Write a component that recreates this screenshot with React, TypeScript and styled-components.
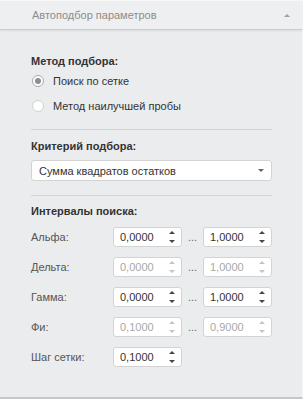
import React from "react";
import styled, { createGlobalStyle } from "styled-components";

const Global = createGlobalStyle`
  html, body { margin: 0; padding: 0; background: #ebecee; }
  body { font-family: "Liberation Sans", Arial, sans-serif; font-size: 11px; color: #333; }
  * { box-sizing: border-box; }
`;

const Panel = styled.div`
  width: 303px;
  height: 399px;
  background: #ebecee;
  border-right: 1px solid #f6f6f7;
  border-bottom: 2px solid #c6c7c9;
  display: flex;
  flex-direction: column;
`;

const Header = styled.div`
  height: 30px;
  flex: none;
  display: flex;
  align-items: center;
  justify-content: space-between;
  padding: 0 12px 0 32px;
  background: #eeeff0;
  border-top: 1px solid #f7f7f8;
  border-bottom: 1px solid #cbcccd;
  box-shadow: 0 1px 2px rgba(0, 0, 0, 0.08);
  color: #8c8c8c;
`;

const Caret = styled.span<{ $up?: boolean; $color?: string }>`
  width: 0;
  height: 0;
  border-left: 3px solid transparent;
  border-right: 3px solid transparent;
  ${(p) =>
    p.$up
      ? `border-bottom: 3px solid ${p.$color || "#999"};`
      : `border-top: 3px solid ${p.$color || "#666"};`}
`;

const Content = styled.div`
  padding: 24px 30px 0 31px;
  display: flex;
  flex-direction: column;
`;

const Heading = styled.div<{ $mt?: number }>`
  font-weight: bold;
  line-height: 14px;
  color: #333;
  margin-top: ${(p) => p.$mt || 0}px;
`;

const RadioList = styled.div`
  display: flex;
  flex-direction: column;
  gap: 5px;
  margin-top: 3px;
`;

const RadioRow = styled.label`
  display: flex;
  align-items: center;
  height: 20px;
  gap: 9px;
  padding-left: 1px;
  color: #333;
`;

const RadioDot = styled.span<{ $checked?: boolean }>`
  width: 12px;
  height: 12px;
  border-radius: 50%;
  border: 1px solid ${(p) => (p.$checked ? "#a9a9a9" : "#d2d2d2")};
  background: #fff;
  display: flex;
  align-items: center;
  justify-content: center;
  &::after {
    content: "";
    width: 6px;
    height: 6px;
    border-radius: 50%;
    background: ${(p) => (p.$checked ? "#8e8e8e" : "transparent")};
  }
`;

const Separator = styled.div<{ $mt: number }>`
  height: 1px;
  background: #d4d5d7;
  margin-top: ${(p) => p.$mt}px;
`;

const Select = styled.div`
  margin-top: 7px;
  height: 21px;
  background: #fff;
  border: 1px solid #d3d3d3;
  border-radius: 3px;
  display: flex;
  align-items: center;
  justify-content: space-between;
  padding: 0 7px 0 7px;
  color: #333;
`;

const Rows = styled.div`
  display: flex;
  flex-direction: column;
  gap: 10px;
  margin-top: 9px;
`;

const Row = styled.div`
  display: flex;
  align-items: center;
  height: 20px;
`;

const Label = styled.div`
  width: 82px;
  color: #555;
`;

const Spin = styled.div<{ $disabled?: boolean }>`
  width: 69px;
  height: 20px;
  background: #fff;
  border: 1px solid #d3d3d3;
  border-radius: 3px;
  display: flex;
  align-items: center;
  justify-content: space-between;
  padding: 0 6px 0 6px;
  color: ${(p) => (p.$disabled ? "#a8a8a8" : "#333")};
`;

const Arrows = styled.div`
  display: flex;
  flex-direction: column;
  gap: 6px;
`;

const Dots = styled.div`
  width: 21px;
  text-align: center;
  color: #666;
`;

const Spinner: React.FC<{ value: string; disabled?: boolean }> = ({ value, disabled }) => (
  <Spin $disabled={disabled}>
    <span>{value}</span>
    <Arrows>
      <Caret $up $color={disabled ? "#c4c4c4" : "#444"} />
      <Caret $color={disabled ? "#c4c4c4" : "#444"} />
    </Arrows>
  </Spin>
);

const rows = [
  { label: "Альфа:", from: "0,0000", to: "1,0000", disabled: false },
  { label: "Дельта:", from: "0,0000", to: "1,0000", disabled: true },
  { label: "Гамма:", from: "0,0000", to: "1,0000", disabled: false },
  { label: "Фи:", from: "0,1000", to: "0,9000", disabled: true },
];

export default function App() {
  return (
    <>
      <Global />
      <Panel>
        <Header>
          <span>Автоподбор параметров</span>
          <Caret $up $color="#a0a0a0" />
        </Header>
        <Content>
          <Heading>Метод подбора:</Heading>
          <RadioList>
            <RadioRow>
              <RadioDot $checked />
              Поиск по сетке
            </RadioRow>
            <RadioRow>
              <RadioDot />
              Метод наилучшей пробы
            </RadioRow>
          </RadioList>
          <Separator $mt={13} />
          <Heading $mt={9}>Критерий подбора:</Heading>
          <Select>
            <span>Сумма квадратов остатков</span>
            <Caret $color="#666" />
          </Select>
          <Separator $mt={14} />
          <Heading $mt={8}>Интервалы поиска:</Heading>
          <Rows>
            {rows.map((r) => (
              <Row key={r.label}>
                <Label>{r.label}</Label>
                <Spinner value={r.from} disabled={r.disabled} />
                <Dots>...</Dots>
                <Spinner value={r.to} disabled={r.disabled} />
              </Row>
            ))}
            <Row>
              <Label>Шаг сетки:</Label>
              <Spinner value="0,1000" />
            </Row>
          </Rows>
        </Content>
      </Panel>
    </>
  );
}
